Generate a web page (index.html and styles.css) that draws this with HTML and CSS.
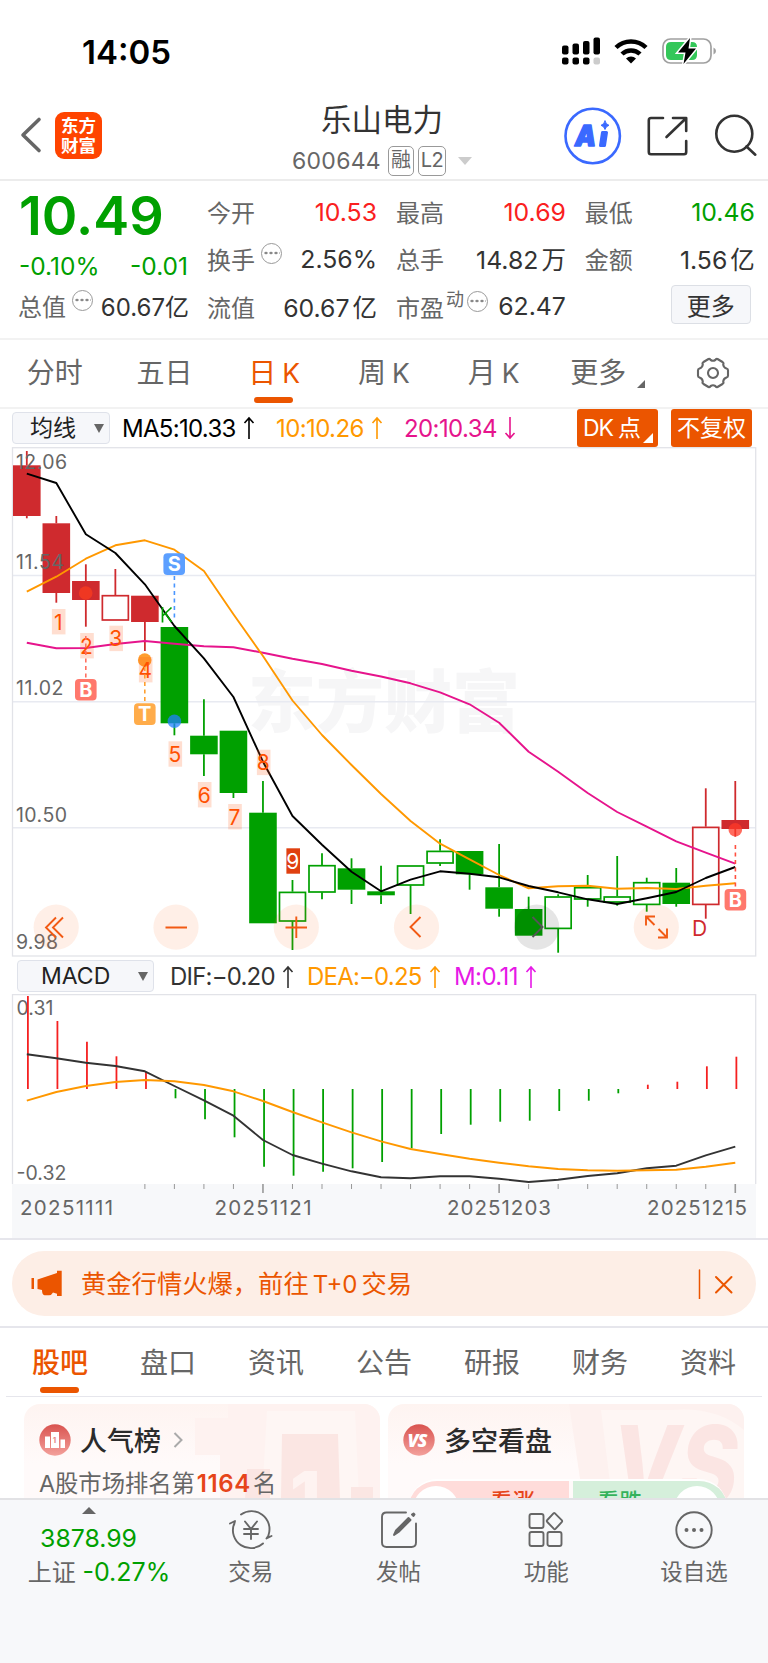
FILE: index.html
```html
<!DOCTYPE html>
<html lang="zh-CN">
<head>
    <meta charset="UTF-8">
    <title>乐山电力 600644</title>
    <link rel="stylesheet" href="styles.css">
</head>
<body>
    <div class="status-bar">
        <span class="clock">14:05</span>
        <svg class="status-icons" viewBox="561 30 156 40" width="156" height="40">
            <g fill="#000">
                <rect x="562" y="45.500" width="6.500" height="9" rx="2"/>
                <rect x="572.500" y="43.500" width="6.500" height="11" rx="2"/>
                <rect x="583" y="41" width="6.500" height="13.500" rx="2"/>
                <rect x="593.500" y="37.500" width="6.500" height="17" rx="2"/>
                <rect x="562" y="57.500" width="6.500" height="7" rx="2"/>
                <rect x="572.500" y="57.500" width="6.500" height="7" rx="2"/>
                <rect x="583" y="57.500" width="6.500" height="7" rx="2"/>
            </g>
            <rect x="593.500" y="57.500" width="6.500" height="7" rx="2" fill="#ccc"/>
            <g fill="none" stroke="#000" stroke-width="4.500">
                <path d="M616 47.500a21.500 21.500 0 0 1 30 0"/>
                <path d="M622 54a13 13 0 0 1 18 0"/>
            </g>
            <path d="M626 58.500a7.500 7.500 0 0 1 10 0L631 63.500z"/>
            <rect x="663" y="39" width="48" height="24" rx="7.500" fill="none" stroke="#a0a0a0" stroke-width="1.700"/>
            <path d="M713.500 47.500q2.500 1 2.500 3.500t-2.500 3.500z" fill="#a0a0a0"/>
            <path d="M671 42h21q5 0 5 5v8q0 5-5 5h-21q-5 0-5-5v-8q0-5 5-5z" fill="#34c759"/>
            <path d="M690 38L678 52.500h7.500L683.500 64 696 48.500h-7.500z" stroke="#fff" stroke-width="3"/>
            <path d="M690 38L678 52.500h7.500L683.500 64 696 48.500h-7.500z"/>
        </svg>
    </div>

    <div class="header">
        <div class="header-left">
            <svg width="22" height="38" viewBox="20 117 22 38"><path d="M39 120.500L23 136l16 15.500" fill="none" stroke="#666" stroke-width="3.600" stroke-linecap="round" stroke-linejoin="round"/></svg>
            <div class="logo">东方<br>财富</div>
        </div>
        <div class="stock">
            <div class="stock-name">乐山电力</div>
            <div class="stock-code">
                <span class="code">600644</span>
                <span class="tag">融</span>
                <span class="tag tag-l2">L2</span>
                <span class="down"></span>
            </div>
        </div>
        <svg class="header-icons" viewBox="563 106 196 60" width="196" height="60" fill="none" stroke-linecap="round" stroke-linejoin="round">
            <circle cx="592.700" cy="136" r="27.200" stroke="#3a69ff" stroke-width="2.600"/>
            <text class="ai" x="575" y="146" textLength="21" lengthAdjust="spacingAndGlyphs">A</text>
            <path d="M602.500 132.500l4 0-2 13-4 0z" fill="#3a69ff" stroke="#3a69ff" stroke-width="3"/>
            <path d="M605 121q.8 3.500 4 4.300-3.200.9-4 4.200-.8-3.300-4-4.200 3.200-.8 4-4.300z" fill="#3a69ff" stroke="#3a69ff"/>
            <g stroke="#333" stroke-width="2.600">
                <path d="M663 118h-12q-2.200 0-2.200 2.200V152q0 2.200 2.200 2.200h33q2.200 0 2.200-2.200v-11"/>
                <path d="M673 118h13.200v13M685.500 118.700L666.500 137"/>
                <circle cx="734.300" cy="133.700" r="18"/>
                <path d="M746.500 146.500l8.800 8.200"/>
            </g>
        </svg>
    </div>

    <div class="quote">
        <div class="price-col">
            <div class="price">10.49</div>
            <div class="change"><span>-0.10%</span><span>-0.01</span></div>
            <div class="cell"><label>总值</label><i class="more-dot"></i><b>60.67亿</b></div>
        </div>
        <div class="quote-grid">
            <div class="cell"><label>今开</label><b class="up">10.53</b></div>
            <div class="cell"><label>最高</label><b class="up">10.69</b></div>
            <div class="cell"><label>最低</label><b class="fall">10.46</b></div>
            <div class="cell"><label>换手</label><i class="more-dot"></i><b>2.56%</b></div>
            <div class="cell"><label>总手</label><b>14.82<em>万</em></b></div>
            <div class="cell"><label>金额</label><b>1.56<em>亿</em></b></div>
            <div class="cell"><label>流值</label><b>60.67<em>亿</em></b></div>
            <div class="cell"><label>市盈</label><sup>动</sup><i class="more-dot"></i><b>62.47</b></div>
            <div class="cell"><button class="more-btn">更多</button></div>
        </div>
    </div>

    <div class="period-tabs">
        <span>分时</span>
        <span>五日</span>
        <span class="active">日<u>K</u></span>
        <span>周<u>K</u></span>
        <span>月<u>K</u></span>
        <span class="has-corner">更多</span>
        <svg width="34" height="34" viewBox="-17 -17 34 34" fill="none" stroke="#666" stroke-width="2.100" stroke-linejoin="round">
            <path d="M-4.500-14Q-3-14.500-2.300-13 0-11.500 2.300-13 3-14.500 4.500-14L9.500-11Q11-10 10.200-8.500 10.500-5.500 13.500-4.500 15-4.200 15-2.800V2.800Q15 4.200 13.500 4.500 10.500 5.500 10.200 8.500 11 10 9.500 11L4.500 14Q3 14.500 2.300 13 0 11.500-2.300 13-3 14.500-4.500 14L-9.500 11Q-11 10-10.200 8.500-10.500 5.500-13.500 4.500-15 4.200-15 2.800V-2.800Q-15-4.200-13.500-4.500-10.500-5.500-10.200-8.500-11-10-9.500-11z"/>
            <circle r="5"/>
        </svg>
    </div>

    <div class="indicator ma">
        <div class="select">均线</div>
        <span class="ma5">MA5:10.33<svg class="arrow" viewBox="0 0 12 24"><path d="M6 23V2M1.500 7L6 2l4.500 5"/></svg></span>
        <span class="ma10">10:10.26<svg class="arrow" viewBox="0 0 12 24"><path d="M6 23V2M1.500 7L6 2l4.500 5"/></svg></span>
        <span class="ma20">20:10.34<svg class="arrow" viewBox="0 0 12 24"><path d="M6 1v21M1.500 17L6 22l4.500-5"/></svg></span>
        <div class="buttons">
            <div class="orange-btn dk">DK<u>点</u></div>
            <div class="orange-btn">不复权</div>
        </div>
    </div>

    <svg id="kline" viewBox="0 447 768 510" width="768" height="510"></svg>

    <div class="indicator macd">
        <div class="select">MACD</div>
        <span class="dif">DIF:−0.20<svg class="arrow" viewBox="0 0 12 24"><path d="M6 23V2M1.500 7L6 2l4.500 5"/></svg></span>
        <span class="dea">DEA:−0.25<svg class="arrow" viewBox="0 0 12 24"><path d="M6 23V2M1.500 7L6 2l4.500 5"/></svg></span>
        <span class="m">M:0.11<svg class="arrow" viewBox="0 0 12 24"><path d="M6 23V2M1.500 7L6 2l4.500 5"/></svg></span>
    </div>

    <svg id="macd" viewBox="0 994 768 244" width="768" height="244"></svg>

    <div class="banner-wrap">
        <div class="banner">
            <svg width="32" height="28" viewBox="31 1270 32 28" fill="#eb5500">
                <path d="M31.500 1278h2.500v11h-2.500zM37.500 1279.500l19.500-6.500v-2.300h4.700v25.300H57v-2.300l-4-1.200q-1.500 3-4.500 2.700h-4q-2.500-.5-2.500-5.200l-4.500-1z"/>
            </svg>
            <span class="banner-text">黄金行情火爆，前往<u>T+0</u>交易</span>
            <svg width="36" height="30" viewBox="698 1268 36 30" fill="none" stroke="#eb5500" stroke-width="1.500" stroke-linecap="round">
                <path d="M699.500 1269v29"/>
                <path d="M716 1276l15.500 15.500M731.500 1276L716 1291.500" stroke-width="2"/>
            </svg>
        </div>
    </div>

    <div class="info-tabs">
        <span class="active">股吧</span>
        <span>盘口</span>
        <span>资讯</span>
        <span>公告</span>
        <span>研报</span>
        <span>财务</span>
        <span>资料</span>
    </div>

    <div class="cards">
        <div class="card">
            <svg class="card-bg" viewBox="24 1404 356 95" width="356" height="95">
                <path d="M195 1418h33v-14h152v95h-160v-44h-25z" fill="#fef2f0"/>
                <path d="M267 1411h88l4 88H262z" fill="#fef6f4"/>
                <path d="M282 1434h56l2 65h-59zM247 1469h23v30h-25zM351 1487h22v12h-22z" fill="#fbe6e3"/>
                <text class="bg-one" x="290" y="1522">1</text>
            </svg>
            <div class="card-title">
                <svg width="32" height="32" viewBox="-16 -16 32 32">
                    <defs><linearGradient id="badge" x2="0" y2="1"><stop stop-color="#d9534f"/><stop offset="1" stop-color="#f3a09b"/></linearGradient></defs>
                    <circle r="15.700" fill="url(#badge)"/>
                    <path d="M-10-3.500h5V8h-5zM-4-8h8V8h-8zM5.500-.5h4.500V8H5.500z" fill="#fff"/>
                    <text class="badge-one" x="-2.200" y="3">1</text>
                </svg>
                <span>人气榜</span>
                <svg width="10" height="18" viewBox="0 0 10 18"><path d="M1.500 2L8.500 9l-7 7" fill="none" stroke="#aaa" stroke-width="2"/></svg>
            </div>
            <div class="rank">A股市场排名第<b>1164</b>名</div>
        </div>
        <div class="card">
            <svg class="card-bg" viewBox="388 1404 356 95" width="356" height="95">
                <path d="M569 1404h175v95H583z" fill="#fdf1ef"/>
                <path d="M601 1410h70q45-4 73 20v69H612z" fill="#fef6f4"/>
                <text class="bg-vs" x="612" y="1505" textLength="126" lengthAdjust="spacingAndGlyphs">VS</text>
            </svg>
            <div class="card-title">
                <svg width="32" height="32" viewBox="-16 -16 32 32">
                    <circle r="15.700" fill="url(#badge)"/>
                    <text class="badge-vs" x="-11.500" y="7">VS</text>
                </svg>
                <span>多空看盘</span>
            </div>
            <div class="vote">
                <div class="vote-up">看涨</div>
                <div class="vote-down">看跌</div>
            </div>
        </div>
    </div>

    <div class="bottom-bar">
        <div class="index">
            <i></i>
            <div class="index-value">3878.99</div>
            <div class="index-name">上证 <b>-0.27%</b></div>
        </div>
        <div class="nav-item">
            <svg viewBox="-22 -20 44 40" width="44" height="40">
                <path d="M-10-15.500A18 18 0 0 1 17.500 5M17.500 5.500L15.500 8.500 20.500 6M12 13.500A18 18 0 0 1-17-6M-21-6.500L-16-9-17-5"/>
                <path d="M-6-8.500L0-1 6-8.500M0-1V9M-7-1H7M-7 4H7"/>
            </svg>
            <span>交易</span>
        </div>
        <div class="nav-item">
            <svg viewBox="-22 -20 44 40" width="44" height="40">
                <path d="M7-17.500H-12.500q-4.500 0-4.500 4.500V12.500q0 4.500 4.500 4.500h25q4.500 0 4.500-4.500V-6.500"/>
                <path d="M-5 5l2-4.500L9.500-12l2 2L-.5 2zM13-15.500l1.500-1 1 1-1 1.500z" fill="#666"/>
            </svg>
            <span>发帖</span>
        </div>
        <div class="nav-item">
            <svg viewBox="-22 -20 44 40" width="44" height="40">
                <rect x="-16.500" y="-16" width="14" height="14" rx="2"/>
                <rect x="-16.500" y="2" width="14" height="14" rx="2"/>
                <rect x="1.500" y="2" width="14" height="14" rx="2"/>
                <path d="M8.700-16.800l7 7q1 1 0 2l-6 6.500q-1 1-2 0L1.300-8q-1-1 0-2l6.400-6.800q.5-.5 1 0z"/>
            </svg>
            <span>功能</span>
        </div>
        <div class="nav-item">
            <svg viewBox="-22 -20 44 40" width="44" height="40">
                <circle r="17.700"/>
                <path d="M-7.500 0h.01M0 0h.01M7.500 0h.01" stroke-width="4"/>
            </svg>
            <span>设自选</span>
        </div>
    </div>

    <script src="chart.js"></script>
</body>
</html>
```
FILE: styles.css
```css
body {
    margin: 0;
    width: 768px;
    height: 1663px;
    overflow: hidden;
    background-color: #fff;
    color: #333;
    font-family: Inter, "Noto Sans CJK SC", sans-serif;
    font-size: 24px;
}
* {
    box-sizing: border-box;
}
svg {
    display: block;
    flex-shrink: 0;
}
u, i, em {
    text-decoration: none;
    font-style: normal;
}
.status-bar {
    display: flex;
    justify-content: space-between;
    height: 100px;
    padding: 30px 51px 0 82px;
}
.clock {
    color: #000;
    font-size: 33px;
    font-weight: 600;
    line-height: 44px;
}
.header {
    display: grid;
    grid-template-columns: 228px 1fr 232px;
    height: 81px;
    border-bottom: 2px solid #ececec;
}
.header-left {
    display: flex;
    align-items: center;
    gap: 13px;
    padding: 0 0 9px 20px;
}
.logo {
    width: 47px;
    height: 47px;
    padding-top: 4px;
    border-radius: 9px;
    background-color: #ff4400;
    color: #fff;
    font-size: 17.500px;
    font-weight: 700;
    line-height: 20px;
    text-align: center;
}
.stock {
    text-align: center;
}
.stock-name {
    height: 44px;
    font-size: 30.500px;
    line-height: 39px;
}
.stock-code {
    display: flex;
    justify-content: center;
    align-items: center;
    gap: 4px;
    height: 33px;
    color: #666;
}
.code {
    margin-right: 3px;
    font-size: 23px;
    letter-spacing: 0.300px;
}
.tag {
    width: 26px;
    height: 30px;
    border: 1.500px solid #999;
    border-radius: 5px;
    font-size: 20px;
    line-height: 27px;
    text-align: center;
}
.tag-l2 {
    width: 28px;
    letter-spacing: -0.500px;
}
.down {
    margin-left: 8px;
    border: 7px solid transparent;
    border-top: 8px solid #ccc;
    border-bottom: 0;
}
.header-icons {
    margin: 6px 0 0 27px;
}
.ai {
    fill: #3a69ff;
    stroke: #3a69ff;
    stroke-width: 1.500px;
    font: italic 900 28px Inter, sans-serif;
}
.quote {
    display: flex;
    height: 159px;
    padding-left: 19px;
    border-bottom: 2px solid #f2f2f2;
}
.price-col {
    width: 169px;
    color: #00a000;
}
.price {
    height: 69px;
    font-size: 54px;
    font-weight: 600;
    line-height: 70px;
}
.change {
    display: flex;
    justify-content: space-between;
    height: 33px;
    font-size: 24.500px;
    line-height: 33px;
}
.quote-grid {
    display: grid;
    grid-template-columns: repeat(3, 170px);
    grid-template-rows: repeat(3, 47.300px);
    column-gap: 18.900px;
    padding: 7px 0 0 19px;
}
.cell {
    display: flex;
    align-items: center;
    height: 47px;
    white-space: nowrap;
}
.price-col .cell {
    margin: -1px 0 0 -1px;
    width: 171px;
}
.cell label {
    color: #666;
    font-size: 24px;
}
.cell b {
    margin-left: auto;
    color: #333;
    font-weight: 400;
}
.quote-grid b {
    font-size: 24.800px;
}
.cell em {
    margin-left: 3px;
    font-size: 24.500px;
}
.cell sup {
    margin: -12px 0 0 2px;
    color: #666;
    font-size: 18px;
    line-height: 20px;
}
.cell .up {
    color: #fa2020;
}
.cell .fall {
    color: #00a000;
}
.more-dot {
    width: 21px;
    height: 21px;
    margin: -10px 0 0 6px;
    border: 1.500px solid #999;
    border-radius: 50%;
    background: radial-gradient(circle, #888 1.300px, transparent 1.600px) 1.500px 0 / 5px 18px repeat-x;
    background-clip: content-box;
    padding: 0 1px;
}
sup + .more-dot {
    margin-left: 3px;
}
.more-btn {
    width: 80px;
    height: 39px;
    margin: -4px 4px 0 auto;
    padding: 0;
    border: 1.500px solid #dcdfe5;
    border-radius: 4px;
    background-color: #f6f7fa;
    color: #333;
    font: inherit;
}
.period-tabs {
    display: flex;
    align-items: center;
    height: 69px;
    border-bottom: 2px solid #f2f2f2;
    color: #666;
    font-size: 28px;
}
.period-tabs span {
    position: relative;
    width: 109.700px;
    height: 69px;
    line-height: 69px;
    text-align: center;
}
.period-tabs u {
    margin-left: 6px;
    font-size: 26.500px;
}
.period-tabs svg {
    margin: -1px 0 0 38px;
}
.period-tabs .active,
.info-tabs .active {
    color: #eb5500;
}
.info-tabs .active {
    font-weight: 500;
}
.active::after {
    content: "";
    position: absolute;
    bottom: 6px;
    left: calc(50% - 20px);
    width: 39px;
    height: 6px;
    border-radius: 3px;
    background-color: #eb5500;
}
.period-tabs .active::after {
    bottom: 5px;
}
.period-tabs .has-corner {
    padding-right: 10px;
}
.has-corner::after {
    content: "";
    position: absolute;
    right: 13px;
    bottom: 20px;
    border: 4px solid;
    border-color: transparent #666 #666 transparent;
}
.indicator {
    display: flex;
    align-items: center;
    white-space: nowrap;
    font-size: 24px;
}
.indicator span {
    display: flex;
    align-items: center;
    letter-spacing: -0.600px;
}
.ma {
    height: 38px;
    padding-left: 12px;
    color: #000;
}
.macd {
    height: 37px;
    padding-left: 17px;
}
.macd span {
    padding-top: 2px;
}
.select {
    position: relative;
    width: 98px;
    height: 32px;
    padding-left: 17px;
    border: 1.500px solid #dfe2ea;
    border-radius: 4px;
    background-color: #f6f7fa;
    color: #222;
    font-size: 23px;
    line-height: 30px;
}
.macd .select {
    width: 137px;
    padding-left: 23px;
    line-height: 31px;
}
.select::after {
    content: "";
    position: absolute;
    top: 11px;
    right: 5px;
    border: 5px solid transparent;
    border-top: 9px solid #666;
    border-bottom: 0;
}
.arrow {
    width: 12px;
    height: 24px;
    margin-left: 7px;
    fill: none;
    stroke: currentColor;
    stroke-width: 1.600px;
}
.ma5 {
    width: 154px;
    margin-left: 12px;
}
.ma .ma5 {
    letter-spacing: -0.700px;
}
.ma10 {
    width: 128px;
    color: #ff9800;
}
.ma20 {
    color: #e6148c;
}
.dif {
    width: 137px;
    margin-left: 16px;
}
.macd .dif,
.macd .dea {
    letter-spacing: -0.800px;
}
.dea {
    width: 147px;
    color: #ff9800;
}
.m {
    color: #e619e6;
}
.buttons {
    display: flex;
    gap: 13px;
    margin: 0 16px 0 auto;
}
.orange-btn {
    position: relative;
    width: 81px;
    height: 38px;
    border-radius: 3px;
    background-color: #eb5500;
    color: #fff;
    font-size: 23px;
    line-height: 39px;
    text-align: center;
}
.dk {
    padding-right: 12px;
    letter-spacing: -1px;
}
.dk u {
    margin-left: 5px;
}
.dk::after {
    content: "";
    position: absolute;
    right: 5px;
    bottom: 4px;
    border: 5px solid;
    border-color: transparent #fff #fff transparent;
}
.axis {
    fill: #666;
    font-size: 19.500px;
}
.watermark {
    fill: #f6f6f7;
    font-size: 68px;
    font-weight: 900;
}
.count {
    font-size: 21px;
    text-anchor: middle;
}
.flag {
    fill: #fff;
    font-size: 20px;
    font-weight: 700;
    text-anchor: middle;
}
.date {
    fill: #666;
    font-size: 20.500px;
}
.banner-wrap {
    height: 90px;
    padding: 11px 12px 0;
    border-top: 2px solid #e6e6ec;
    border-bottom: 2px solid #e6e6ec;
}
.banner {
    display: flex;
    align-items: center;
    height: 65px;
    padding: 0 22px 0 19px;
    border-radius: 33px;
    background-color: #fdeee6;
    color: #eb5500;
}
.banner-text {
    flex: 1;
    margin-top: -3px;
    padding-left: 18px;
    font-size: 25.300px;
}
.banner-text u {
    margin: 0 4px;
    font-size: 24px;
}
.info-tabs {
    display: flex;
    height: 69px;
    margin: 0 6px;
    border-bottom: 1.500px solid #e6e6ec;
    color: #666;
    font-size: 28px;
    line-height: 71px;
    text-align: center;
}
.info-tabs span {
    position: relative;
    width: 108px;
}
.info-tabs .active::after {
    bottom: 3px;
}
.cards {
    display: flex;
    gap: 8px;
    height: 101px;
    padding: 7px 24px 0;
    overflow: hidden;
}
.card {
    position: relative;
    width: 356px;
    height: 160px;
    padding: 19px 15px 0;
    overflow: hidden;
    border-radius: 16px;
    background: linear-gradient(#fef4f1, #fffafa 60px);
}
.card-bg {
    position: absolute;
    top: 0;
    left: 0;
}
.card-title {
    position: relative;
    display: flex;
    align-items: center;
    gap: 9px;
    height: 33px;
    color: #2b2b2b;
    font-size: 27px;
    font-weight: 500;
}
.card-title svg:last-child {
    margin-left: 3px;
}
.rank {
    position: relative;
    margin-top: 11px;
    color: #666;
    font-size: 23.300px;
    line-height: 34px;
}
.rank b {
    margin: 0 2px;
    color: #e6451a;
    font-size: 24px;
    font-weight: 600;
    letter-spacing: 0.600px;
}
.bg-one {
    fill: #fef3f1;
    font-size: 70px;
    font-weight: 800;
}
.bg-vs {
    fill: #fbe5e3;
    font: italic 800 110px Inter, sans-serif;
}
.badge-one {
    fill: #e58a86;
    font-size: 8px;
    font-weight: 700;
}
.badge-vs {
    fill: #fff;
    font: italic 800 18px "Open Sans", sans-serif;
    letter-spacing: -1px;
}
.vote {
    position: relative;
    display: flex;
    gap: 4px;
    width: 318px;
    height: 56px;
    margin: 23px 0 0 6px;
    border-top: 2px solid #fff;
    border-radius: 28px;
    overflow: hidden;
    font-size: 22.500px;
    font-weight: 500;
    line-height: 42px;
    text-align: center;
}
.vote::before,
.vote::after {
    content: "";
    position: absolute;
    top: 5px;
    left: 4px;
    width: 46px;
    height: 46px;
    border-radius: 50%;
    background-color: #fff;
}
.vote::after {
    left: auto;
    right: 7px;
}
.vote-up {
    width: 160px;
    padding: 0 3px 0 50px;
    background-color: #ffdcda;
    color: #e6451a;
}
.vote-down {
    width: 154px;
    padding-right: 61px;
    background-color: #d5efdb;
    color: #35b25c;
}
.bottom-bar {
    position: relative;
    display: flex;
    height: 165px;
    border-top: 2px solid #e2e2e5;
    background-color: #f7f8fa;
    color: #666;
}
.index {
    width: 177px;
    text-align: center;
}
.index i {
    display: block;
    width: 0;
    margin: 7px auto 0;
    border: 7px solid transparent;
    border-top: 0;
    border-bottom: 7px solid #666;
}
.index-value {
    height: 34px;
    margin-top: 7px;
    color: #00a000;
    font-size: 24.800px;
    line-height: 34px;
}
.index-name {
    padding-left: 21px;
    line-height: 34px;
    white-space: nowrap;
}
.index-name b {
    color: #00a000;
    font-size: 25px;
    font-weight: 400;
}
.nav-item {
    display: flex;
    flex-direction: column;
    align-items: center;
    width: 147.700px;
    padding-top: 10px;
    font-size: 22.500px;
}
.nav-item svg {
    fill: none;
    stroke: #666;
    stroke-width: 1.900px;
    stroke-linecap: round;
    stroke-linejoin: round;
}
.nav-item span {
    margin-top: 6px;
    line-height: 32px;
}
```
FILE: chart.js
```js
const RED = '#cf2a2e', GREEN = '#00a000', STEP = 29.52;

// [body top, body bottom, high, low, color, hollow]
const candles = [
    [465.3, 516, 451, 518.3, RED, 0],
    [523.3, 593, 516, 602.7, RED, 0],
    [581, 600, 564.3, 626.7, RED, 0],
    [595, 620.3, 569, 620.3, RED, 1],
    [595.7, 622, 595.7, 651, RED, 0],
    [627, 723.3, 627, 735.3, GREEN, 0],
    [735.7, 754.3, 699.3, 776, GREEN, 0],
    [730.7, 793, 730.7, 798, GREEN, 0],
    [812.7, 923.3, 781, 923.3, GREEN, 0],
    [891.7, 921.3, 880, 950, GREEN, 1],
    [865, 892.3, 853.3, 899.3, GREEN, 1],
    [868.3, 889.7, 858.3, 904, GREEN, 0],
    [891.3, 895.3, 865.7, 904, GREEN, 0],
    [865.3, 885.3, 865.3, 914, GREEN, 1],
    [850.7, 863.3, 839.3, 866, GREEN, 1],
    [851, 874.3, 851, 889.7, GREEN, 0],
    [887.3, 908.7, 844, 916.7, GREEN, 0],
    [909, 935.7, 896.7, 935.7, GREEN, 0],
    [896.3, 928.7, 894.3, 952.7, GREEN, 1],
    [887, 899.3, 875, 906.7, GREEN, 1],
    [896.3, 902.3, 856, 905.7, GREEN, 1],
    [882, 904.7, 877.7, 911.7, GREEN, 1],
    [882.7, 904, 868, 906.7, GREEN, 0],
    [826.7, 904.7, 788.3, 918.7, RED, 1],
    [820, 829, 781, 836.7, RED, 0]
];
const ma5 = [473.7, 483, 534.3, 553, 584.3, 626, 658.3, 697, 761.7, 816, 844.7, 871.7, 891.3, 879.7, 871.3, 873.7, 877.3, 886, 892.3, 899.3, 904, 898.3, 892, 878, 867];
const ma10 = [591.7, 576.7, 558.7, 545.3, 540.3, 549.7, 571, 614.3, 656, 700.5, 735, 765, 794, 821, 843.7, 859.3, 875, 888.3, 886.3, 885.7, 888.7, 888, 889, 885.7, 883.3];
const ma20 = [642.7, 648.3, 648, 644, 641, 643.7, 646.3, 647.3, 652.7, 658.7, 664, 670.7, 676.5, 683.3, 692.3, 704.3, 722.7, 751.7, 771.7, 793, 812, 826.7, 841.3, 852.7, 863.7];

const bars = [996, 1021, 1041.7, 1056.3, 1072, 1098.3, 1119.3, 1137.3, 1166.7, 1175.7, 1171.7, 1168.3, 1162, 1148.3, 1134, 1124.7, 1121.7, 1120.7, 1111, 1100.7, 1093.3, 1084.7, 1081.7, 1066.3, 1056.7];
const dif = [1054.3, 1058.3, 1062.7, 1066, 1071.3, 1086, 1100.3, 1115.7, 1140, 1155, 1163.7, 1171.3, 1177.3, 1178.3, 1176.3, 1176.3, 1178.7, 1182, 1179.7, 1176, 1173.3, 1168.3, 1165.7, 1155.3, 1146.7];
const dea = [1100.7, 1092, 1086, 1082, 1080, 1081.3, 1085, 1091.3, 1101, 1112, 1122.3, 1132.3, 1141.3, 1149, 1154, 1158.7, 1162.7, 1166.3, 1169, 1170.3, 1170.7, 1170.3, 1169.7, 1166.7, 1162.7];

const cx = i => 26.8 + STEP * i;

function line(x1, y1, x2, y2, color, width, extra) {
    return `<line x1="${x1}" y1="${y1}" x2="${x2}" y2="${y2}" stroke="${color}" stroke-width="${width}" ${extra || ''}/>`;
}
function curve(data, color) {
    const points = data.map((y, i) => cx(i) + ',' + y).join(' ');
    return `<polyline points="${points}" fill="none" stroke="${color}" stroke-width="1.9" stroke-linejoin="round"/>`;
}
function text(cls, x, y, str, len, extra) {
    return `<text class="${cls}" x="${x}" y="${y}" ${len ? `textLength="${len}"` : ''} ${extra || ''}>${str}</text>`;
}
function flag(x, y, letter, color) {
    return `<rect x="${x - 10.8}" y="${y}" width="21.6" height="21.6" rx="4" fill="${color}"/>` + text('flag', x, y + 18, letter);
}
function dash(x, y1, y2, color) {
    return line(x, y1, x, y2, color, 1.6, 'stroke-dasharray="4 3.5"');
}

function drawKline() {
    let s = text('watermark', 248, 727, '东方财富', 272);
    [575.5, 701.7, 827.7].forEach(y => s += line(12, y, 756, y, '#e8eaf1', 1.5));
    s += '<rect x="12.5" y="447.7" width="743.2" height="508.3" fill="none" stroke="#e2e3e8" stroke-width="1.3"/>';

    candles.forEach(([top, bottom, high, low, color, hollow], i) => {
        const x = cx(i);
        s += line(x, high, x, top, color, 1.8) + line(x, bottom, x, low, color, 1.8);
        s += hollow
            ? `<rect x="${x - 13}" y="${top + .7}" width="26" height="${bottom - top - 1}" fill="#fff" stroke="${color}" stroke-width="1.7"/>`
            : `<rect x="${x - 13.8}" y="${top}" width="27.6" height="${bottom - top}" fill="${color}"/>`;
    });

    s += text('axis', 16, 468.5, '12.06', 51) + text('axis', 16, 568.5, '11.54', 48)
        + text('axis', 16, 695, '11.02', 47.5) + text('axis', 16, 822.3, '10.50', 51) + text('axis', 16, 948.5, '9.98', 42);

    s += curve(ma20, '#e6148c') + curve(ma10, '#ff9800') + curve(ma5, '#000');

    // dots and signal flags
    s += '<circle cx="85.7" cy="593" r="6.8" fill="#f53a20" opacity=".85"/>';
    s += '<circle cx="144.7" cy="660" r="6.8" fill="#ff9f30"/>';
    s += '<circle cx="174.4" cy="721.3" r="6.8" fill="#2080ff" opacity=".75"/>';
    s += '<circle cx="735.3" cy="829.7" r="6.8" fill="#ff3a28" opacity=".75"/>';

    const counts = [[58.7, 609], [87, 633], [116.2, 625.7], [145.7, 657], [175.3, 741.3], [204.7, 782], [235, 804], [263.7, 749.7], [293.2, 848.3]];
    counts.forEach(([x, y], i) => {
        const last = i === 8;
        s += `<rect x="${x - 6.8}" y="${y}" width="13.6" height="25.4" fill="${last ? '#e04010' : '#ff5a14'}" fill-opacity="${last ? 1 : .2}"/>`;
        s += text('count', x - .5, y + 20.5, i + 1, 0, `fill="${last ? '#fff' : '#ff5000'}"`);
    });

    s += dash(85.8, 636, 679, '#ff7060') + flag(85.8, 679, 'B', '#ff786c');
    s += dash(144.8, 667, 703, '#ff9f30') + flag(144.8, 703.3, 'T', '#ffac4a');
    s += dash(174.4, 576, 620, '#4a96ff') + flag(174.2, 553.3, 'S', '#5c9fff');
    s += dash(735.4, 845, 889, '#ff5040') + flag(735.4, 889, 'B', '#ff786c');
    s += `<path d="M162.5 607v15.500M171.500 607.500l-8.500 8M165.500 613.500l6 8.500" fill="none" stroke="${GREEN}" stroke-width="1.700"/>`;
    s += text('count', 699.5, 935.5, 'D', 0, `fill="${RED}"`);

    // round chart controls
    [56.2, 176, 296.3, 416.5, 536.7, 656.3].forEach((x, i) => {
        s += `<circle cx="${x}" cy="927.2" r="22.6" fill="${i === 4 ? '#000' : '#ff6a20'}" opacity="${i === 4 ? .1 : .11}"/>`;
    });
    s += '<g fill="none" stroke="#f25a14" stroke-width="1.9">'
        + '<path d="M56 917.500L46 927.500l10 10M63 917.500l-10 10 10 10"/>'
        + '<path d="M165.500 927.500h21.500M285.500 927.500H307M296.300 916.500v21.500"/>'
        + '<path d="M420.500 917l-10 10 10 10"/>'
        + '<path d="M655 916.500h-9v9M646 916.500l8.500 8.500M658 937.500h9v-9M667 937.500l-8.500-8.500"/></g>'
        + '<path d="M532.500 917l10 10-10 10" fill="none" stroke="#555" stroke-width="1.900"/>';
    document.getElementById('kline').innerHTML = s;
}

function drawMacd() {
    let s = '<rect x="12" y="1184" width="744" height="54" fill="#f7f8fa"/>';
    s += '<path d="M12.500 1184V994.500H755.700V1184" fill="none" stroke="#e2e3e8" stroke-width="1.300"/>';
    s += text('axis', 16.5, 1014.8, '0.31', 37) + text('axis', 16.5, 1179.8, '-0.32', 50);
    bars.forEach((y, i) => {
        const x = 27.9 + 29.52 * i;
        s += line(x, 1089, x, y, y < 1089 ? '#f52020' : GREEN, 1.8);
    });
    s += curve(dif, '#333') + curve(dea, '#ff9800');
    for (let i = 4; i < 25; i++) {
        const tall = i % 8 === 0;
        s += line(cx(i), 1184, cx(i), tall ? 1193 : 1189, '#999', tall ? 1.6 : 1);
    }
    s += text('date', 20, 1214.7, '20251111', 93) + text('date', 214.5, 1214.7, '20251121', 97)
        + text('date', 447, 1214.7, '20251203', 104) + text('date', 647, 1214.7, '20251215', 100);
    document.getElementById('macd').innerHTML = s;
}

drawKline();
drawMacd();
```
